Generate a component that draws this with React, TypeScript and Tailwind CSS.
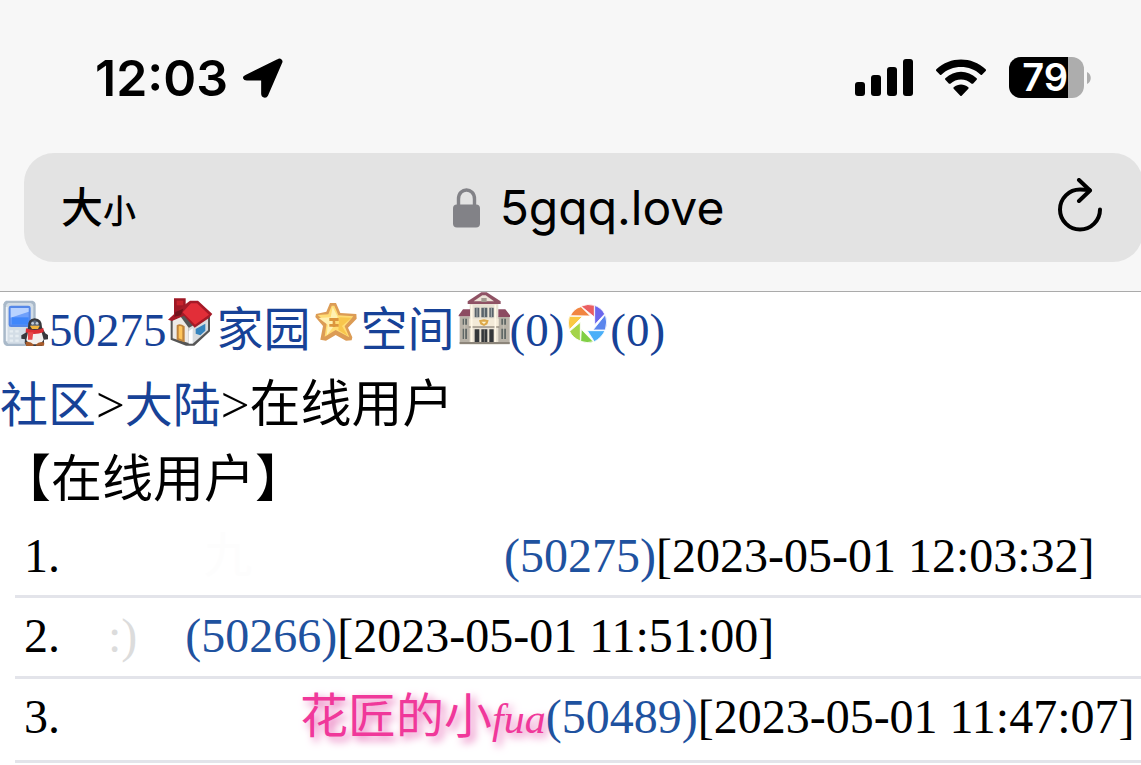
import React from 'react';

interface OnlineUser {
  id: string;
  name: React.ReactNode;
  time: string;
  rowClass: string;
}

const users: OnlineUser[] = [
  {
    id: '50275',
    name: <span className="ml-36 mr-63 text-[#fdfdfd]">九</span>,
    time: '2023-05-01 12:03:32',
    rowClass: 'pb-[2px]',
  },
  {
    id: '50266',
    name: <span className="mx-12 text-[#dcdcdc]">:)</span>,
    time: '2023-05-01 11:51:00',
    rowClass: 'pb-[3px]',
  },
  {
    id: '50489',
    name: (
      <span className="ml-60 text-[#f0389a] [text-shadow:4px_4px_8px_#e668b4]">
        花匠的小<i className="text-[42px] leading-none">fua</i>
      </span>
    ),
    time: '2023-05-01 11:47:07',
    rowClass: 'pb-[6px]',
  },
];

function LocationArrow() {
  return (
    <svg width="42" height="42" viewBox="0 0 40 40" aria-hidden="true">
      <path
        d="M3.2 18 34.500 2.500a2.200 2.200 0 0 1 3 3L24 36.500c-1.200 2.400-5 1.700-5-1.400V22.500a.9.9 0 0 0-.9-.9H4.500c-3 0-3.700-2.500-1.300-3.600Z"
        stroke="#000"
        strokeWidth="1.500"
        strokeLinejoin="round"
      />
    </svg>
  );
}

function SignalBars() {
  return (
    <svg width="58" height="37" viewBox="0 0 58 37" aria-hidden="true">
      <rect x="0" y="23" width="10" height="14" rx="3" />
      <rect x="16" y="16" width="10" height="21" rx="3" />
      <rect x="32" y="8" width="10" height="29" rx="3" />
      <rect x="48" y="0" width="10" height="37" rx="3" />
    </svg>
  );
}

function Wifi() {
  return (
    <svg width="52" height="38" viewBox="0 0 156 114" aria-hidden="true">
      <path d="M4 36 Q2 34 4 31 C46-8 110-8 152 31 Q154 34 152 36 L141 47 Q139 49 137 47 C105 16 51 16 19 47 Q17 49 15 47Z" />
      <path d="M31 62 Q29 60 31 58 C58 32 98 32 125 58 Q127 60 125 62 L114 74 Q112 75 110 74 C92 57 64 57 46 74 Q44 75 42 74Z" />
      <path d="M56 89 Q54 87 56 85 C70 74 86 74 100 85 Q102 87 100 89 L80 110 Q78 112 76 110Z" />
    </svg>
  );
}

function Battery() {
  return (
    <div className="flex items-center gap-[3px]">
      <div className="flex h-[41px] w-[75px] items-center rounded-[12px] bg-[#adadad]">
        <div className="flex h-full w-[59px] items-center justify-end rounded-l-[12px] bg-black text-[38px] leading-[41px] font-semibold text-white">
          79
        </div>
      </div>
      <svg width="4" height="14" viewBox="0 0 4 14" aria-hidden="true">
        <path d="M0 1c5 2 5 10 0 12Z" fill="#adadad" />
      </svg>
    </div>
  );
}

function Lock() {
  return (
    <svg width="27" height="40" viewBox="0 0 27 40" aria-hidden="true">
      <path d="M5.500 18V11C5.500-1 21.500-1 21.500 11V18" fill="none" stroke="#828287" strokeWidth="3.400" />
      <rect x="0" y="16.500" width="27" height="23" rx="4" fill="#828287" />
    </svg>
  );
}

function Reload() {
  return (
    <svg
      width="46"
      height="60"
      viewBox="0 1 46 60"
      fill="none"
      stroke="#000"
      strokeWidth="4"
      strokeLinecap="round"
      strokeLinejoin="round"
      aria-hidden="true"
    >
      <path d="M43 32.500A20 20 0 1 1 23 12.500q6 0 9.500.5" />
      <path d="M22 3l11 10.500L22 24" />
    </svg>
  );
}

function PhoneIcon() {
  return (
    <svg className="inline align-baseline" width="49" height="47" viewBox="0 42 147 141" aria-hidden="true">
      <path d="M18 47H98q9 3 9 12V183H20q-10-3-10-14V58q1-8 8-11Z" fill="#a9b9c9" />
      <path d="M25 54H92q8 2 8 10V176H25q-7-2-7-10V62q1-6 7-8Z" fill="#d3dde6" />
      <path d="M20 66v102" stroke="#eef3f8" strokeWidth="5" />
      <rect x="26" y="62" width="66" height="64" rx="7" fill="#5487e8" />
      <rect x="32" y="69" width="54" height="50" fill="#6fa0fb" />
      <path d="M32 69H86V80L32 98Z" fill="#b8d2ff" />
      <path d="M35 97H86V119H35Z" fill="#3f86fa" />
      <path d="M29 139h10m7 0h10M29 153h10m7 0h10M29 167h10m7 0h10" stroke="#e6edf2" strokeWidth="7" />
      {/* penguin */}
      <path d="M84 127Q82 101 104 100Q127 101 126 127L136 145L144 150V163L132 164V177L126 183H80L74 174L75 163L64 161V151L77 143Z" fill="#38383c" />
      <path d="M92 126q-2-18 12-20q15 2 14 20Z" fill="#59677b" />
      <circle cx="98" cy="115" r="4" fill="#c4ced8" />
      <circle cx="111" cy="115" r="4" fill="#c4ced8" />
      <path d="M90 122h29l-5 10H96Z" fill="#f1b43c" />
      <path d="M84 142h41l6 22-10 14H88l-9-13Z" fill="#f3f0ee" />
      <path d="M78 130q27 11 52-1l1 12q-27 11-54 1Z" fill="#dc2d32" />
      <path d="M84 142h16l-3 22H84Z" fill="#e84949" />
      <path d="M76 172q13-5 26 7l-3 4H79Zm31 7q12-12 26-6l-1 9h-23Z" fill="#a85c2b" />
    </svg>
  );
}

function HouseIcon() {
  return (
    <svg className="inline align-baseline" width="50" height="49" viewBox="501 36 150 147" aria-hidden="true">
      <path d="M512 106L535 76L574 104L630 94V139L583 182H558L512 164Z" fill="#555" />
      <path d="M518 104L536 87L566 128V174L518 160Z" fill="#edeae7" />
      <path d="M566 129L624 95V136L578 176H566Z" fill="#d8dcdf" />
      <path d="M566 139L578 130V175H566Z" fill="#fff" />
      <path d="M530 121q10-8 24 3v48l-24-8Z" fill="#bf843d" />
      <path d="M536 124q7-2 11 2v38l-11-4Z" fill="#ffc55a" />
      <path d="M587 132L616 116V137L601 151L587 146Z" fill="#3684bd" />
      <path d="M522 40H557V62L546 78L522 90Z" fill="#9e1825" />
      <path d="M530 47H550V61H530Z" fill="#c7232d" />
      <path d="M504 104L546 65L570 47H594L637 87L626 100L584 128L552 92L516 108Z" fill="#a51a27" />
      <path d="M548 82L573 55H591L627 89L585 119Z" fill="#e22e38" />
      <path d="M526 81L550 71L543 91L523 95Z" fill="#71141c" />
    </svg>
  );
}

function StarIcon() {
  return (
    <svg className="inline align-baseline" width="50" height="49" viewBox="933 36 150 147" aria-hidden="true">
      <path
        d="M990 54h18l13 30 48 3 1 14-26 27 13 29-2 9-17 1-31-17-29 17-17-3 8-41-23-27 2-9 31-7Z"
        fill="#dc9c55"
      />
      <path d="M995 62h8l12 29 45 3-26 30 14 33-41-22-33 20 6-41-27-24 32-2Z" fill="#ffdc74" />
      <path d="M998 66l-6 31-36 2 27 20-3 33 21-28 12-29Z" fill="#fff1b1" />
      <path d="M1018 97l37 1-29 25 17 29-28-17Z" fill="#f8c64c" />
      <path d="M988 99h28v9h-28zm0 18h28v8h-28zm10-15h8v24h-8z" fill="#dc953c" />
    </svg>
  );
}

function BuildingIcon() {
  return (
    <svg
      className="inline overflow-visible align-baseline"
      width="55"
      height="53"
      viewBox="345 24 165 159"
      aria-hidden="true"
    >
      <path d="M359 94H509V178H359Z" fill="#b8b2a7" />
      <path d="M389 49H475V178H389Z" fill="#e8e1d3" />
      <path d="M356 91L369 73H390V94H356ZM475 73H496L510 91V96H475Z" fill="#8c4b61" />
      <path d="M383 49L424 22H440L482 49V57H383Z" fill="#8f5264" />
      <path d="M401 49L427 31H437L462 49Z" fill="#ede4d8" />
      <path d="M424 39h16v12h-16z" fill="#a49a91" />
      <path d="M404 68h14v29h-14zm20 0h18v29h-18zm24 0h13v29h-13z" fill="#59636a" />
      <path d="M411 68v29m22-29v29m21-29v29" stroke="#aeb4b3" strokeWidth="3" />
      <path d="M388 101h88v24h-88z" fill="#f3ead8" />
      <path d="M417 106l15-3 14 3-4 12-10 5-11-5Z" fill="#dda848" />
      <path d="M424 110h15l-7 7Z" fill="#fff5d0" />
      <path d="M386 126h92" stroke="#938a7e" strokeWidth="4" />
      <path d="M404 133h14v39h-14zm20 0h18v39h-18zm24 0h13v39h-13z" fill="#34373a" />
      <path d="M433 133v39" stroke="#9b9992" strokeWidth="2" />
      <path d="M368 101h13v18h-13zm0 30h13v31h-13zm116-30h14v18h-14zm0 30h14v31h-14z" fill="#606866" />
      <path d="M374 101v62m117-62v62" stroke="#c8c5ba" strokeWidth="3" />
      <path d="M395 59v114m71-114v114" stroke="#fff8e7" strokeWidth="5" />
      <path d="M359 174h150" stroke="#8c857a" strokeWidth="6" />
    </svg>
  );
}

function ApertureIcon() {
  return (
    <svg className="inline align-baseline" width="46" height="43" viewBox="675 54 138 129" aria-hidden="true">
      <g stroke="#fff" strokeWidth="2.500">
        <path d="M728 63Q746 55 766 61V96L728 65Z" fill="#ea5e62" />
        <path d="M767 61Q788 69 797 87L767 119Z" fill="#6b66ed" />
        <path d="M799 89Q807 110 799 135L762 135Z" fill="#5b86ed" />
        <path d="M745 137H798Q788 158 766 170Z" fill="#4aaff8" />
        <path d="M727 133L763 170Q745 176 725 169Z" fill="#80cf45" />
        <path d="M724 112V168Q700 158 692 139Z" fill="#a4d449" />
        <path d="M691 94H731L691 134Q685 114 691 94Z" fill="#fac843" />
        <path d="M694 92Q705 70 726 65L754 93Z" fill="#f18541" />
      </g>
      <circle cx="745" cy="115" r="17" fill="#fff" />
    </svg>
  );
}

export default function App() {
  return (
    <div className="min-h-screen overflow-x-hidden bg-white font-['Liberation_Serif','Noto_Sans_CJK_SC',serif] text-black">
      <header className="border-b border-[#aaaaaa] bg-[#f7f7f7] pb-[29px] font-[Inter,'Noto_Sans_CJK_SC',sans-serif]">
        {/* Status bar */}
        <div className="flex h-[153px] items-center justify-between pt-[2px] pr-[50px] pl-[95px]">
          <div className="flex items-center gap-[14px]">
            <span className="text-[50px] leading-[60px] font-semibold">12:03</span>
            <LocationArrow />
          </div>
          <div className="flex items-center gap-[22px]">
            <SignalBars />
            <Wifi />
            <Battery />
          </div>
        </div>

        {/* Address bar */}
        <div className="-mr-[2px] ml-6 flex h-[109px] items-center justify-between rounded-[30px] bg-[#e3e3e3] pr-10 pl-[37px]">
          <button type="button" className="flex items-baseline pt-1 font-medium">
            <span className="text-[42px] leading-[60px]">大</span>
            <span className="text-[33px] leading-[60px]">小</span>
          </button>
          <a href="#address" className="flex items-center gap-5 pr-4">
            <Lock />
            <span className="text-[48px] leading-[60px]">5gqq.love</span>
          </a>
          <button type="button" aria-label="Reload">
            <Reload />
          </button>
        </div>
      </header>

      <main className="pt-px leading-[75px] whitespace-nowrap">
        <nav className="text-[47px] text-[#174297]">
          <a href="#me"><PhoneIcon />50275</a>
          <a href="#home"><HouseIcon />家园</a>
          <a href="#space"><StarIcon />空间</a>
          <a href="#bank"><BuildingIcon />(0)</a>
          <a href="#album"><ApertureIcon />(0)</a>
        </nav>

        <div className="text-[51px]">
          <a href="#community" className="text-[48px] leading-none text-[#174297]">社区</a>
          &gt;
          <a href="#mainland" className="text-[48px] leading-none text-[#174297]">大陆</a>
          &gt;在线用户
        </div>
        <h1 className="text-[51px]">【在线用户】</h1>

        <ol className="ml-[15px] text-[48px]">
          {users.map((user, i) => (
            <li key={user.id} className={`flex border-b-[3px] border-[#e3e4ea] pl-[9px] ${user.rowClass}`}>
              <span>{i + 1}.</span>
              {user.name}
              <a href={`#user-${user.id}`} className="text-[#1f529f]">({user.id})</a>
              <span>[{user.time}]</span>
            </li>
          ))}
        </ol>
      </main>
    </div>
  );
}
